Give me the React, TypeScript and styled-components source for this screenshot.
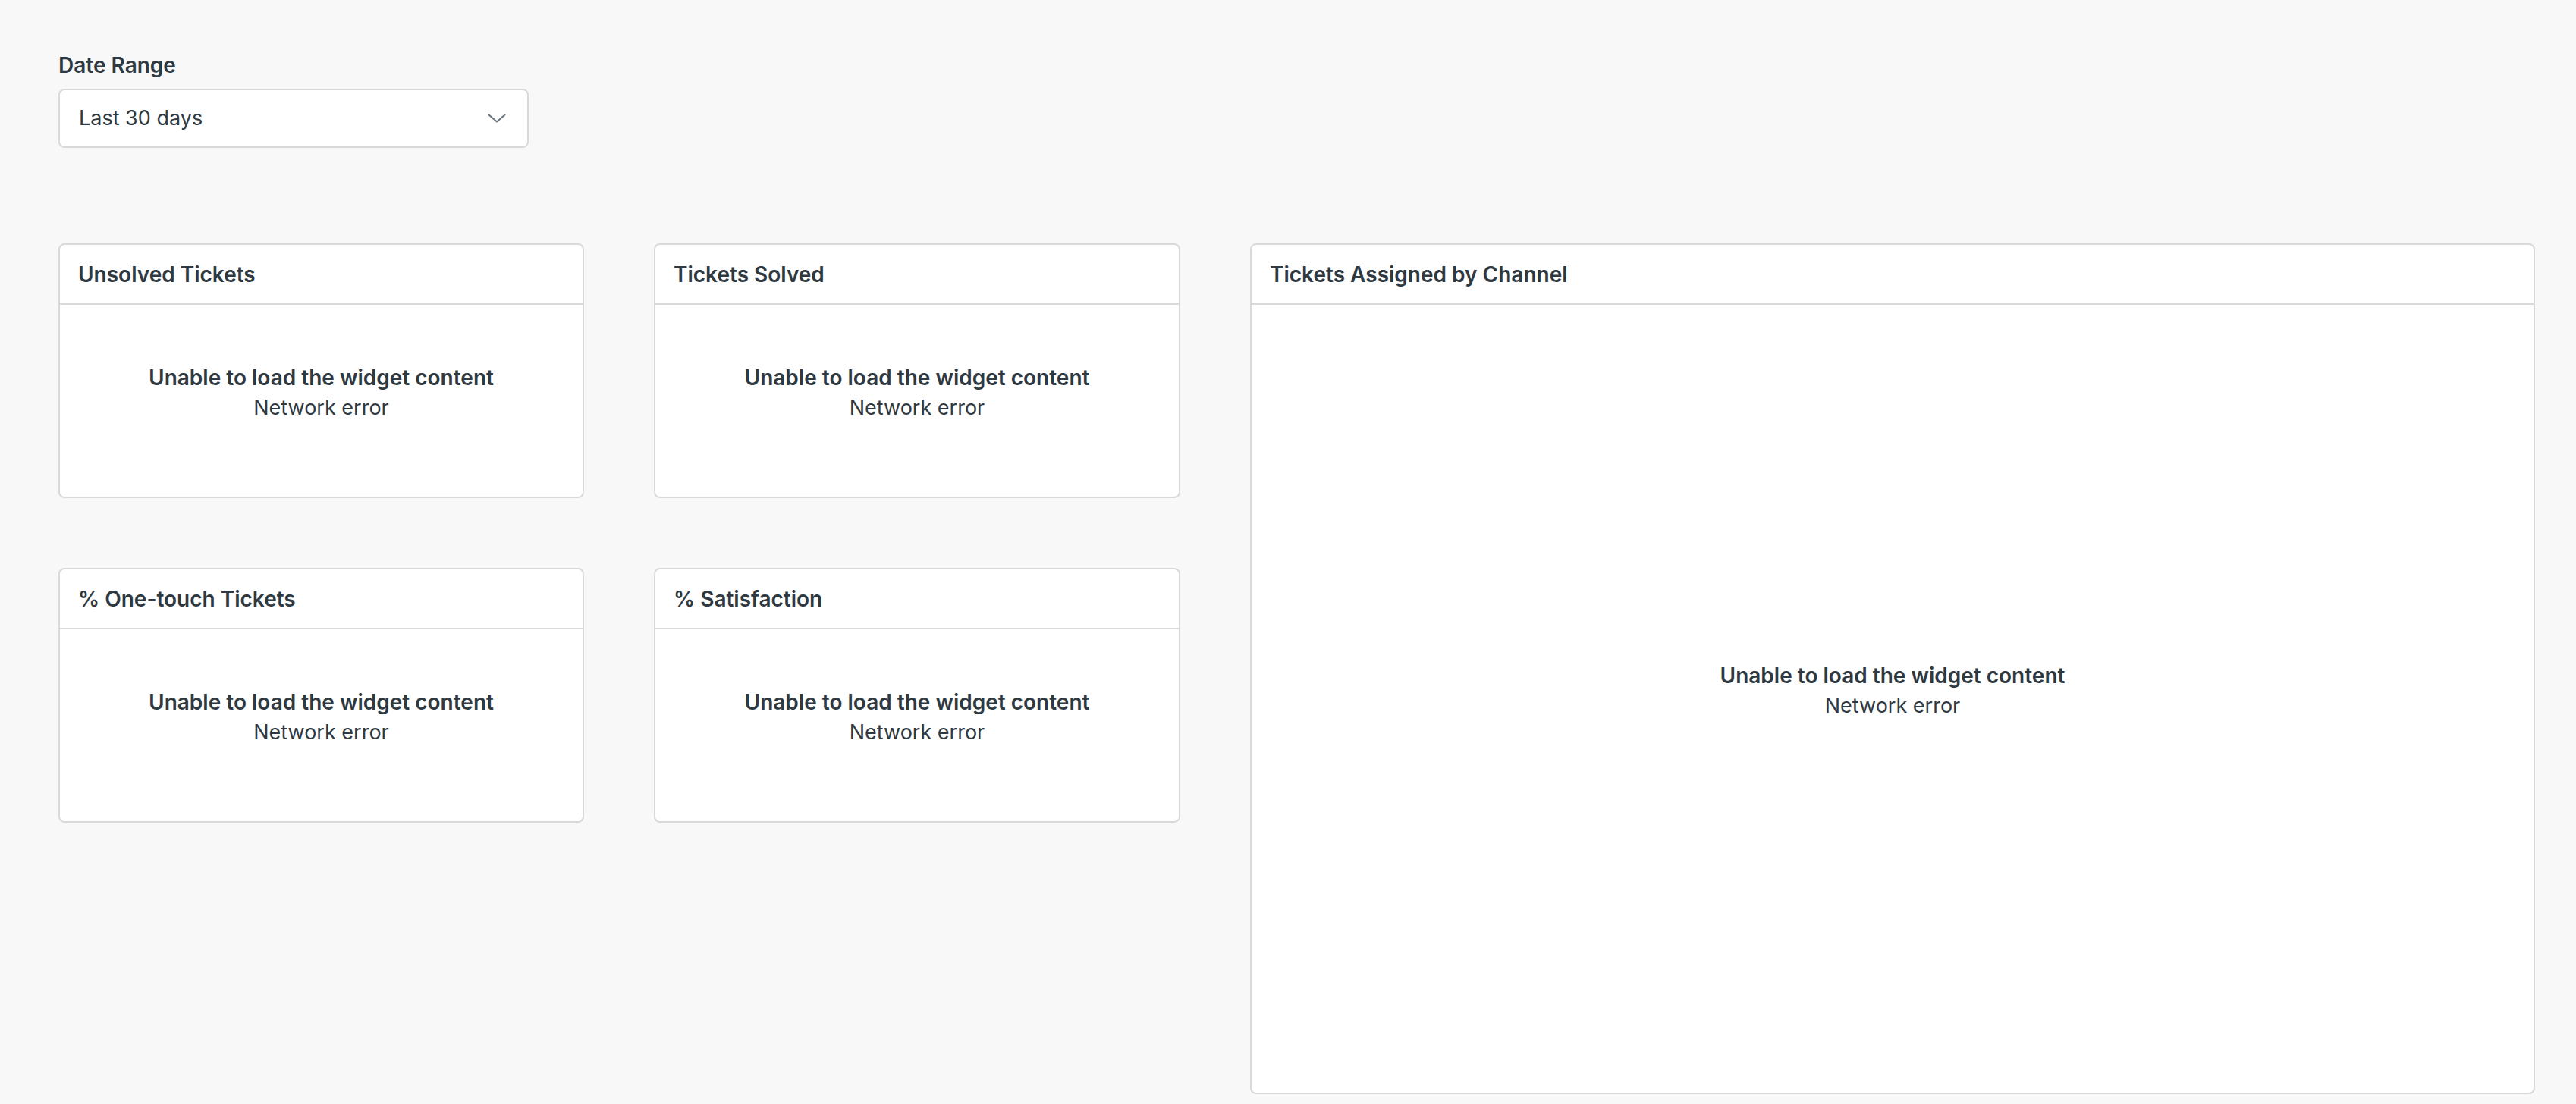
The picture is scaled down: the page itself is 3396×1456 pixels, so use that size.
import React from 'react';
import styled, { createGlobalStyle } from 'styled-components';

const GlobalStyle = createGlobalStyle`
  html, body {
    margin: 0;
    padding: 0;
    background-color: #f8f8f8;
  }
  body {
    font-family: Inter, "Noto Sans", "Liberation Sans", sans-serif;
    color: #2f3941;
  }
`;

const Page = styled.div`
  min-height: 1456px;
  box-sizing: border-box;
  padding: 66px 54px 0 77px;
`;

const Filter = styled.div`
  display: flex;
  flex-direction: column;
  width: 620px;
`;

const Label = styled.label`
  font-size: 28px;
  line-height: 40px;
  font-weight: 600;
  color: #2f3941;
  margin-bottom: 11px;
`;

const Select = styled.div`
  height: 78px;
  box-sizing: border-box;
  display: flex;
  align-items: center;
  justify-content: space-between;
  padding: 0 28px 0 25px;
  background: #fff;
  border: 2px solid #d8d9da;
  border-radius: 8px;
  font-size: 27px;
  line-height: 40px;
  color: #2f3941;
`;

const Chevron = styled.svg`
  width: 24px;
  height: 12px;
  flex-shrink: 0;
`;

const Dashboard = styled.div`
  display: flex;
  align-items: flex-start;
  gap: 92px;
  margin-top: 126px;
`;

const SmallGrid = styled.div`
  display: grid;
  grid-template-columns: 693px 694px;
  column-gap: 92px;
  row-gap: 92px;
`;

const Card = styled.section<{ $width?: number; $height: number }>`
  width: ${(p) => (p.$width ? `${p.$width}px` : 'auto')};
  height: ${(p) => p.$height}px;
  box-sizing: border-box;
  display: flex;
  flex-direction: column;
  background: #fff;
  border: 2px solid #d8d9da;
  border-radius: 8px;
`;

const CardHeader = styled.header`
  height: 77px;
  flex-shrink: 0;
  display: flex;
  align-items: center;
  padding: 0 24px;
  border-bottom: 2px solid #d8d9da;
  font-size: 28px;
  font-weight: 600;
  line-height: 40px;
`;

const CardBody = styled.div`
  flex: 1;
  display: flex;
  flex-direction: column;
  align-items: center;
  justify-content: center;
  padding: 0 24px 22px;
  text-align: center;
  line-height: 40px;
`;

const ErrorTitle = styled.div`
  font-size: 28px;
  font-weight: 600;
`;

const ErrorText = styled.div`
  font-size: 27px;
  font-weight: 400;
`;

const Widget = ({ title, width, height }: { title: string; width?: number; height: number }) => (
  <Card $width={width} $height={height}>
    <CardHeader>{title}</CardHeader>
    <CardBody>
      <ErrorTitle>Unable to load the widget content</ErrorTitle>
      <ErrorText>Network error</ErrorText>
    </CardBody>
  </Card>
);

const small = ['Unsolved Tickets', 'Tickets Solved', '% One-touch Tickets', '% Satisfaction'];

export default function App() {
  return (
    <>
      <GlobalStyle />
      <Page>
        <Filter>
          <Label>Date Range</Label>
          <Select>
            <span>Last 30 days</span>
            <Chevron viewBox="0 0 24 12" fill="none">
              <polyline points="1.5,1.5 12,10.5 22.5,1.5" stroke="#68737d" strokeWidth="2" strokeLinecap="round" strokeLinejoin="round" />
            </Chevron>
          </Select>
        </Filter>
        <Dashboard>
          <SmallGrid>
            {small.map((t) => (
              <Widget key={t} title={t} height={336} />
            ))}
          </SmallGrid>
          <Widget title="Tickets Assigned by Channel" width={1694} height={1122} />
        </Dashboard>
      </Page>
    </>
  );
}
